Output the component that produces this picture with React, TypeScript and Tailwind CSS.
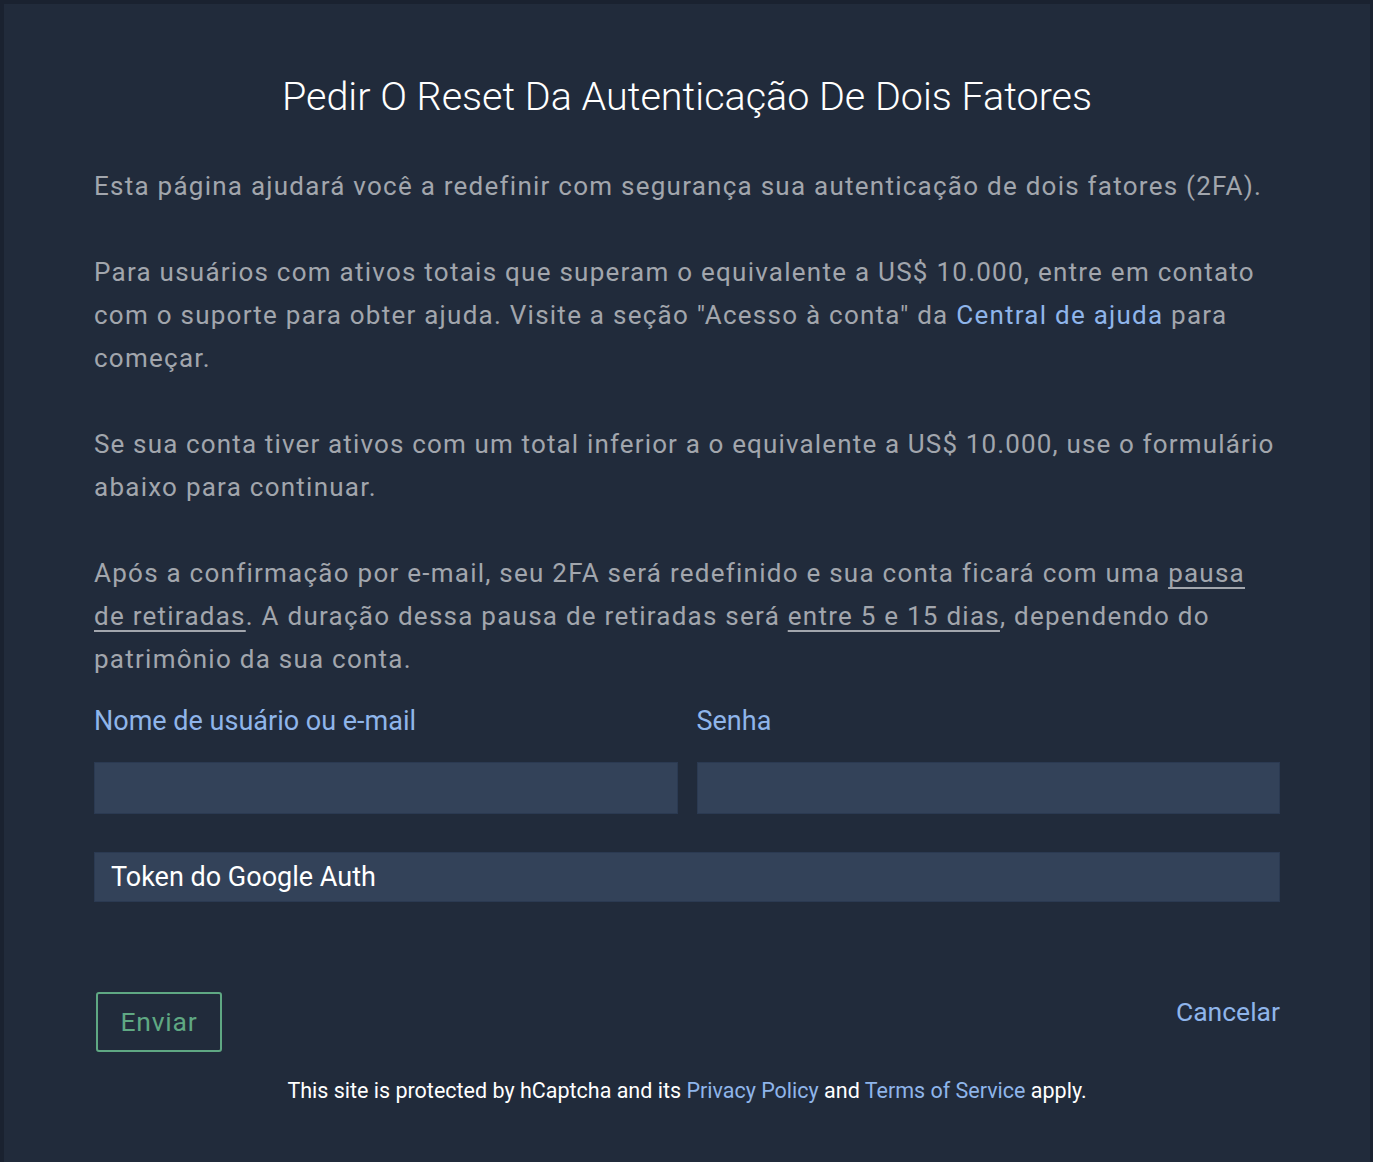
export default function App() {
  const font = { fontFamily: 'Roboto, "Noto Sans", sans-serif' }

  return (
    <div className="min-h-[1162px] w-full bg-[#1a2230] pl-[4px] pr-[3px] pt-[4px]" style={font}>
      <div className="min-h-[1158px] bg-[#212b3b] px-[90px] pb-[40px] pt-[69px]">
        {/* Title */}
        <h1 className="text-center text-[39.5px] font-light leading-[48px] text-white">
          Pedir O Reset Da Autenticação De Dois Fatores
        </h1>

        {/* Body */}
        <div className="mt-[44px] text-[26px] leading-[43px] tracking-[1.25px] text-[#a2a6ad]">
          <p>Esta página ajudará você a redefinir com segurança sua autenticação de dois fatores (2FA).</p>
          <p className="mt-[43px]">
            Para usuários com ativos totais que superam o equivalente a US$ 10.000, entre em contato com o suporte
            para obter ajuda. Visite a seção "Acesso à conta" da{' '}
            <a className="text-[#8fb5ea]">Central de ajuda</a> para começar.
          </p>
          <p className="mt-[43px]">
            <span className="whitespace-nowrap tracking-[1.15px]">
              Se sua conta tiver ativos com um total inferior a o equivalente a US$ 10.000, use o formulário
            </span>{' '}
            abaixo para continuar.
          </p>
          <p className="mt-[43px]">
            Após a confirmação por e-mail, seu 2FA será redefinido e sua conta ficará com uma{' '}
            <span className="underline underline-offset-[5px]">pausa de retiradas</span>. A duração dessa pausa de
            retiradas será <span className="underline underline-offset-[5px]">entre 5 e 15 dias</span>, dependendo
            do patrimônio da sua conta.
          </p>
        </div>

        {/* Form */}
        <div className="mt-[25px] grid grid-cols-2 gap-x-[19px]">
          <div>
            <label className="block text-[27px] leading-[30px] text-[#8fb5ea]">Nome de usuário ou e-mail</label>
            <input className="mt-[26px] block h-[52px] w-full border border-[#2b3a52] bg-[#334259] px-4 text-[25px] text-white outline-none" />
          </div>
          <div>
            <label className="block text-[27px] leading-[30px] text-[#8fb5ea]">Senha</label>
            <input
              type="password"
              className="mt-[26px] block h-[52px] w-full border border-[#2b3a52] bg-[#334259] px-4 text-[25px] text-white outline-none"
            />
          </div>
        </div>

        <input
          placeholder="Token do Google Auth"
          className="mt-[38px] block h-[50px] w-full border border-[#2b3a52] bg-[#334259] px-[16px] text-[27px] text-white outline-none placeholder:text-white"
        />

        {/* Actions */}
        <div className="mt-[90px] flex items-start justify-between pl-[2px]">
          <button className="h-[60px] w-[126px] rounded-[3px] border-2 border-[#5fa883] text-[26.5px] tracking-[0.8px] text-[#5fa883]">
            Enviar
          </button>
          <a className="mt-[4px] text-[26.5px] leading-[32px] text-[#8fb5ea]">Cancelar</a>
        </div>

        <p className="mt-[26px] text-center text-[21.5px] leading-[26px] text-white">
          This site is protected by hCaptcha and its <a className="text-[#8fb5ea]">Privacy Policy</a> and{' '}
          <a className="text-[#8fb5ea]">Terms of Service</a> apply.
        </p>
      </div>
    </div>
  )
}
